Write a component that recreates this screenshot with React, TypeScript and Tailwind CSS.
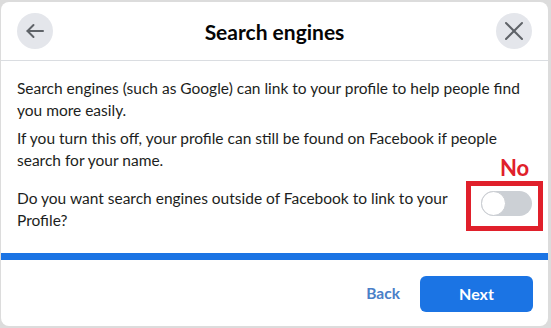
import React from "react";

function BackIcon() {
  return (
    <svg width="20" height="20" viewBox="0 0 20 20" fill="none" stroke="#5f6368" strokeWidth="2" strokeLinecap="round" strokeLinejoin="round">
      <path d="M18 10H2.5" />
      <path d="M8.5 4L2.5 10L8.5 16" />
    </svg>
  );
}

function CloseIcon() {
  return (
    <svg width="20" height="20" viewBox="0 0 20 20" fill="none" stroke="#5f6368" strokeWidth="2" strokeLinecap="round">
      <path d="M2 2L18 18" />
      <path d="M18 2L2 18" />
    </svg>
  );
}

export default function App() {
  return (
    <div className="w-[551px] h-[328px] bg-[#dcdcdc] pt-[2px] pl-[1px]" style={{ fontFamily: 'Lato, "Noto Sans", sans-serif' }}>
      <div className="w-[547px] h-[324px] bg-white rounded-[8px] flex flex-col overflow-hidden">
        <div className="h-[59px] shrink-0 flex items-center justify-between px-[16px] border-b border-[#dadde1]">
          <div className="w-[36px] h-[36px] rounded-full bg-[#e4e6eb] flex items-center justify-center">
            <BackIcon />
          </div>
          <div className="text-[21px] font-bold text-[#050505] leading-none">Search engines</div>
          <div className="w-[36px] h-[36px] rounded-full bg-[#e4e6eb] flex items-center justify-center">
            <CloseIcon />
          </div>
        </div>

        <div className="px-[16px] pt-[16px] text-[15.5px] leading-[22px] text-[#1c1e21] flex flex-col gap-[6px]">
          <p className="w-[512px]">Search engines (such as Google) can link to your profile to help people find you more easily.</p>
          <p className="w-[490px]">If you turn this off, your profile can still be found on Facebook if people search for your name.</p>
          <div className="flex items-start justify-between mt-[10px]">
            <p className="w-[440px]">Do you want search engines outside of Facebook to link to your Profile?</p>
            <div className="relative mt-[4px]">
              <div className="w-[51px] h-[25px] rounded-full bg-[#ccd0d5] relative">
                <div className="absolute left-0 top-0 w-[25px] h-[25px] rounded-full bg-white border border-[#c9ccd1]" />
              </div>
              <div className="absolute -left-[15px] -top-[10px] w-[77px] h-[50px] border-[5px] border-[#e0202b]" />
              <div className="absolute left-[19px] -top-[34px] text-[22px] font-bold leading-none text-[#e0202b]">No</div>
            </div>
          </div>
        </div>

        <div className="mt-[22px] h-[7px] bg-[#1b74e4] shrink-0" />

        <div className="flex items-center justify-end gap-[20px] pr-[15px] pt-[16px]">
          <span className="text-[15.5px] font-bold text-[#4a80c8]">Back</span>
          <div className="w-[113px] h-[36px] rounded-[6px] bg-[#1b74e4] flex items-center justify-center text-white text-[16px] font-bold">
            Next
          </div>
        </div>
      </div>
    </div>
  );
}
